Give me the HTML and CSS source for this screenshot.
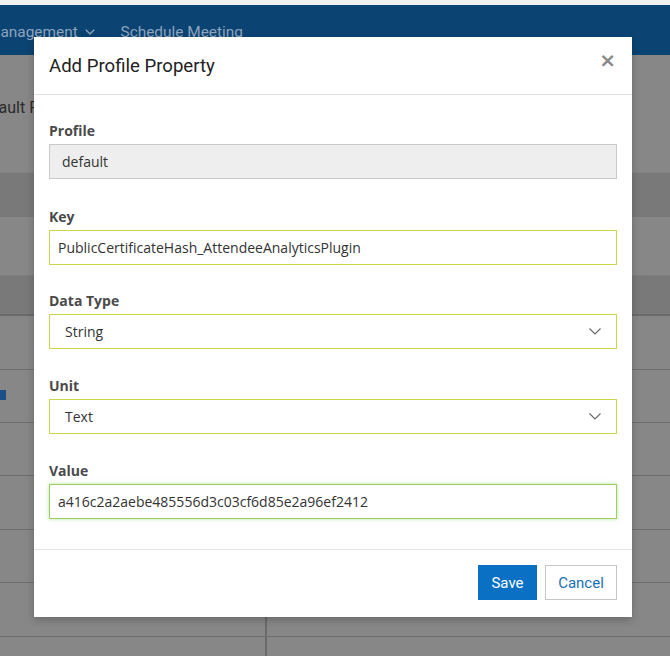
FILE: index.html
```html
<!DOCTYPE html>
<html>
<head>
<meta charset="utf-8">
<link rel="stylesheet" href="styles.css">
</head>
<body>
<div class="page">
  <div class="topstrip"></div>
  <nav class="nav">
    <span class="nav-item first">Management
      <svg class="caret" width="10" height="6" viewBox="0 0 10 6"><path d="M0.8 0.8 L5 5 L9.2 0.8" fill="none" stroke="#8da4bd" stroke-width="1.4"/></svg>
    </span>
    <span class="nav-item">Schedule Meeting</span>
  </nav>
  <div class="content">
    <div class="heading">Default Profile Properties</div>
    <div class="band b1"></div>
    <div class="row r1"></div>
    <div class="band b2"></div>
    <div class="row h54"></div>
    <div class="row h53"><span class="rowicon"></span></div>
    <div class="row h53"></div>
    <div class="row h54"></div>
    <div class="row h53"></div>
    <div class="row h54 split"><div class="cell c1"></div><div class="cell"></div></div>
    <div class="row last split"><div class="cell c1"></div><div class="cell"></div></div>
  </div>

  <div class="modal">
    <div class="modal-header">
      <h4 class="modal-title">Add Profile Property</h4>
      <span class="close">&times;</span>
    </div>
    <div class="modal-body">
      <div class="group g1">
        <label class="label">Profile</label>
        <div class="field disabled">default</div>
      </div>
      <div class="group g2">
        <label class="label">Key</label>
        <div class="field warn">PublicCertificateHash_AttendeeAnalyticsPlugin</div>
      </div>
      <div class="group">
        <label class="label">Data Type</label>
        <div class="field warn select"><span>String</span>
          <svg class="chev" width="12" height="7" viewBox="0 0 12 7"><path d="M0.5 0.5 L6 6 L11.5 0.5" fill="none" stroke="#666" stroke-width="1.1"/></svg>
        </div>
      </div>
      <div class="group">
        <label class="label">Unit</label>
        <div class="field warn select"><span>Text</span>
          <svg class="chev" width="12" height="7" viewBox="0 0 12 7"><path d="M0.5 0.5 L6 6 L11.5 0.5" fill="none" stroke="#666" stroke-width="1.1"/></svg>
        </div>
      </div>
      <div class="group lastgroup">
        <label class="label">Value</label>
        <div class="field ok">a416c2a2aebe485556d3c03cf6d85e2a96ef2412</div>
      </div>
    </div>
    <div class="modal-footer">
      <button class="btn primary">Save</button>
      <button class="btn default">Cancel</button>
    </div>
  </div>
</div>
</body>
</html>
```

FILE: styles.css
```css
* { box-sizing: border-box; }
html, body { margin: 0; padding: 0; }
body {
  width: 670px;
  height: 656px;
  overflow: hidden;
  background: #878787;
  font-family: "Open Sans", "Noto Sans", sans-serif;
}
.page { position: relative; width: 670px; height: 656px; overflow: hidden; }
.topstrip { height: 5px; background: #f1f1f1; }
.nav {
  height: 50px;
  background: #0b4372;
  display: flex;
  align-items: center;
  padding-top: 3px;
  font-family: "Roboto", sans-serif;
  font-size: 15.4px;
  color: #8da4bd;
}
.nav-item.first { margin-left: -13px; margin-right: 26px; }
.caret { margin-left: 3px; vertical-align: middle; }

.content { background: #878787; }
.heading {
  height: 102px;
  padding-top: 43px;
  margin-left: -26px;
  font-family: "Roboto", sans-serif;
  font-size: 16px;
  color: #2b2b2b;
  white-space: nowrap;
}
.band { background: #797979; }
.band.b1 { height: 45px; margin-top: 15px; border-top: 1px solid #828282; }
.row.r1 { height: 59px; border-bottom: 1px solid #7d7d7d; }
.band.b2 { height: 40px; border-bottom: 2px solid #6a6a6a; }
.row { border-bottom: 1px solid #6c6c6c; position: relative; }
.row.h53 { height: 53px; }
.row.h54 { height: 54px; }
.rowicon {
  position: absolute; left: 0; top: 20px; width: 6px; height: 10px;
  background: #1c4f85;
}
.row.split { display: flex; }
.row.last { height: 60px; border-bottom: 0; }
.cell.c1 { width: 267px; border-right: 2px solid #6a6a6a; }

.modal {
  position: absolute;
  left: 34px;
  top: 37px;
  width: 598px;
  background: #fff;
  box-shadow: 0 3px 8px rgba(0,0,0,0.22);
}
.modal-header {
  height: 58px;
  border-bottom: 1px solid #e3e3e3;
  display: flex;
  align-items: center;
  justify-content: space-between;
  padding: 0 16px 0 15px;
}
.modal-title {
  margin: 0;
  font-family: "Roboto", sans-serif;
  font-weight: 400;
  font-size: 18.6px;
  color: #222;
}
.close {
  font-family: "DejaVu Sans", sans-serif;
  font-size: 20px;
  font-weight: bold;
  color: #888;
  margin-top: -12px;
}
.modal-body { padding: 26px 15px 30px; }
.group { margin-bottom: 27px; }
.group.g1 { margin-bottom: 28px; }
.group.g2 { margin-bottom: 26px; }
.group.lastgroup { margin-bottom: 0; }
.label {
  display: block;
  font-size: 14px;
  font-weight: 700;
  color: #4a4a4a;
  line-height: 20px;
  margin-bottom: 3px;
}
.field {
  height: 35px;
  border: 1px solid #ccc;
  display: flex;
  align-items: center;
  font-size: 14px;
  color: #333;
  padding: 0 8px;
}
.field.disabled { background: #eeeeee; padding-left: 12px; border-color: #c9c9c9; }
.field.warn { border-color: #cdd64a; }
.field.ok { border-color: #9ccf5a; box-shadow: 0 0 4px rgba(140, 210, 120, 0.6); }
.field.select { justify-content: space-between; padding: 0 15px 0 15px; }
.chev { display: block; }

.modal-footer {
  border-top: 1px solid #e5e5e5;
  padding: 15px 15px 17px;
  display: flex;
  justify-content: flex-end;
  gap: 8px;
}
.btn {
  height: 35px;
  font-family: "Roboto", sans-serif;
  font-size: 15px;
  border-radius: 0;
  padding: 0;
}
.btn.primary { background: #0a70c4; color: #fff; border: 1px solid #0a70c4; width: 59px; }
.btn.default { background: #fff; color: #1a6fb5; border: 1px solid #c5c5c5; width: 72px; }
```
